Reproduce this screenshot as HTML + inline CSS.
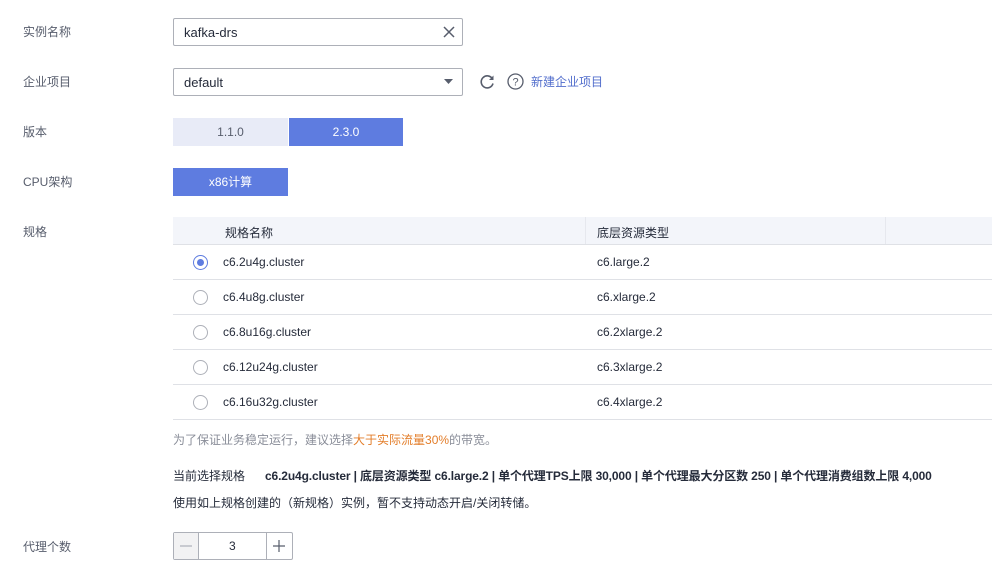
<!DOCTYPE html>
<html><head><meta charset="utf-8"><style>
*{margin:0;padding:0;box-sizing:border-box}
body{width:992px;height:575px;background:#fff;font-family:"Liberation Sans","Noto Sans CJK SC",sans-serif;font-size:12px;color:#252b3a;position:relative;overflow:hidden}
.a{position:absolute;white-space:nowrap}
.lbl{left:23px;color:#575d6c}
.inp{border:1px solid #adb0b8;border-radius:2px;background:#fff}
.row{position:absolute;left:173px;width:819px;height:35px;border-bottom:1px solid #dfe1e6}
.row .r{position:absolute;left:20px;top:10px;width:15px;height:15px;border:1px solid #adb0b8;border-radius:50%;background:#fff}
.row .n{position:absolute;left:50px;top:10px}
.row .t{position:absolute;left:424px;top:10px}
</style></head><body>
<div class="a lbl" style="top:23px">实例名称</div>
<div class="a inp" style="left:173px;top:18px;width:290px;height:28px"></div>
<div class="a" style="left:184px;top:25px;font-size:13px">kafka-drs</div>
<svg class="a" style="left:443px;top:26px" width="12" height="12"><path d="M1 1L11 11M11 1L1 11" stroke="#575d6c" stroke-width="1.5"/></svg>

<div class="a lbl" style="top:73px">企业项目</div>
<div class="a inp" style="left:173px;top:68px;width:290px;height:28px"></div>
<div class="a" style="left:184px;top:75px;font-size:13px">default</div>
<svg class="a" style="left:444px;top:79px" width="10" height="6"><path d="M0 0H9L4.5 5Z" fill="#575d6c"/></svg>
<svg class="a" style="left:480px;top:74px" width="15" height="15"><path d="M12.5 5A6 6 0 1 0 13 9.5" fill="none" stroke="#575d6c" stroke-width="1.6"/><path d="M13.5 1.5V6H9Z" fill="#575d6c"/></svg>
<svg class="a" style="left:507px;top:73px" width="17" height="17"><circle cx="8.5" cy="8.5" r="7.5" fill="none" stroke="#575d6c" stroke-width="1.3"/><text x="8.5" y="12.5" font-size="11" text-anchor="middle" fill="#575d6c" font-family="Liberation Sans">?</text></svg>
<div class="a" style="left:531px;top:73px;color:#526ecc">新建企业项目</div>

<div class="a lbl" style="top:123px">版本</div>
<div class="a" style="left:173px;top:118px;width:115px;height:28px;background:#e8ebf7;color:#575d6c;text-align:center;line-height:28px">1.1.0</div>
<div class="a" style="left:289px;top:118px;width:114px;height:28px;background:#5e7ce0;color:#fff;text-align:center;line-height:28px">2.3.0</div>

<div class="a lbl" style="top:173px">CPU架构</div>
<div class="a" style="left:173px;top:168px;width:115px;height:28px;background:#5e7ce0;color:#fff;text-align:center;line-height:28px">x86计算</div>

<div class="a lbl" style="top:223px">规格</div>
<div class="a" style="left:173px;top:217px;width:819px;height:28px;background:#f3f5fa;border-bottom:1px solid #dfe1e6"></div>
<div class="a" style="left:585px;top:217px;width:1px;height:27px;background:#e6e8ee"></div>
<div class="a" style="left:885px;top:217px;width:1px;height:27px;background:#e6e8ee"></div>
<div class="a" style="left:225px;top:224px">规格名称</div>
<div class="a" style="left:597px;top:224px">底层资源类型</div>

<div class="row" style="top:245px"><div class="r" style="border-color:#5e7ce0"><div style="position:absolute;left:3px;top:3px;width:7px;height:7px;border-radius:50%;background:#5e7ce0"></div></div><div class="n">c6.2u4g.cluster</div><div class="t">c6.large.2</div></div>
<div class="row" style="top:280px"><div class="r"></div><div class="n">c6.4u8g.cluster</div><div class="t">c6.xlarge.2</div></div>
<div class="row" style="top:315px"><div class="r"></div><div class="n">c6.8u16g.cluster</div><div class="t">c6.2xlarge.2</div></div>
<div class="row" style="top:350px"><div class="r"></div><div class="n">c6.12u24g.cluster</div><div class="t">c6.3xlarge.2</div></div>
<div class="row" style="top:385px"><div class="r"></div><div class="n">c6.16u32g.cluster</div><div class="t">c6.4xlarge.2</div></div>

<div class="a" style="left:173px;top:431px;color:#8a8e99">为了保证业务稳定运行，建议选择<span style="color:#e37d29">大于实际流量30%</span>的带宽。</div>
<div class="a" style="left:173px;top:467px">当前选择规格</div>
<div class="a" style="left:265px;top:467px;font-weight:bold;letter-spacing:-0.13px">c6.2u4g.cluster | 底层资源类型 c6.large.2 | 单个代理TPS上限 30,000 | 单个代理最大分区数 250 | 单个代理消费组数上限 4,000</div>
<div class="a" style="left:173px;top:494px">使用如上规格创建的（新规格）实例，暂不支持动态开启/关闭转储。</div>

<div class="a lbl" style="top:538px">代理个数</div>
<div class="a inp" style="left:173px;top:532px;width:120px;height:28px"></div>
<div class="a" style="left:174px;top:533px;width:25px;height:26px;background:#f2f2f3;border-right:1px solid #adb0b8"></div>
<div class="a" style="left:266px;top:533px;width:1px;height:26px;background:#adb0b8"></div>
<svg class="a" style="left:180px;top:540px" width="12" height="12"><path d="M0 6H12" stroke="#adb0b8" stroke-width="1.2"/></svg>
<div class="a" style="left:229px;top:539px">3</div>
<svg class="a" style="left:273px;top:540px" width="12" height="12"><path d="M0 6H12M6 0V12" stroke="#575d6c" stroke-width="1.2"/></svg>
</body></html>
